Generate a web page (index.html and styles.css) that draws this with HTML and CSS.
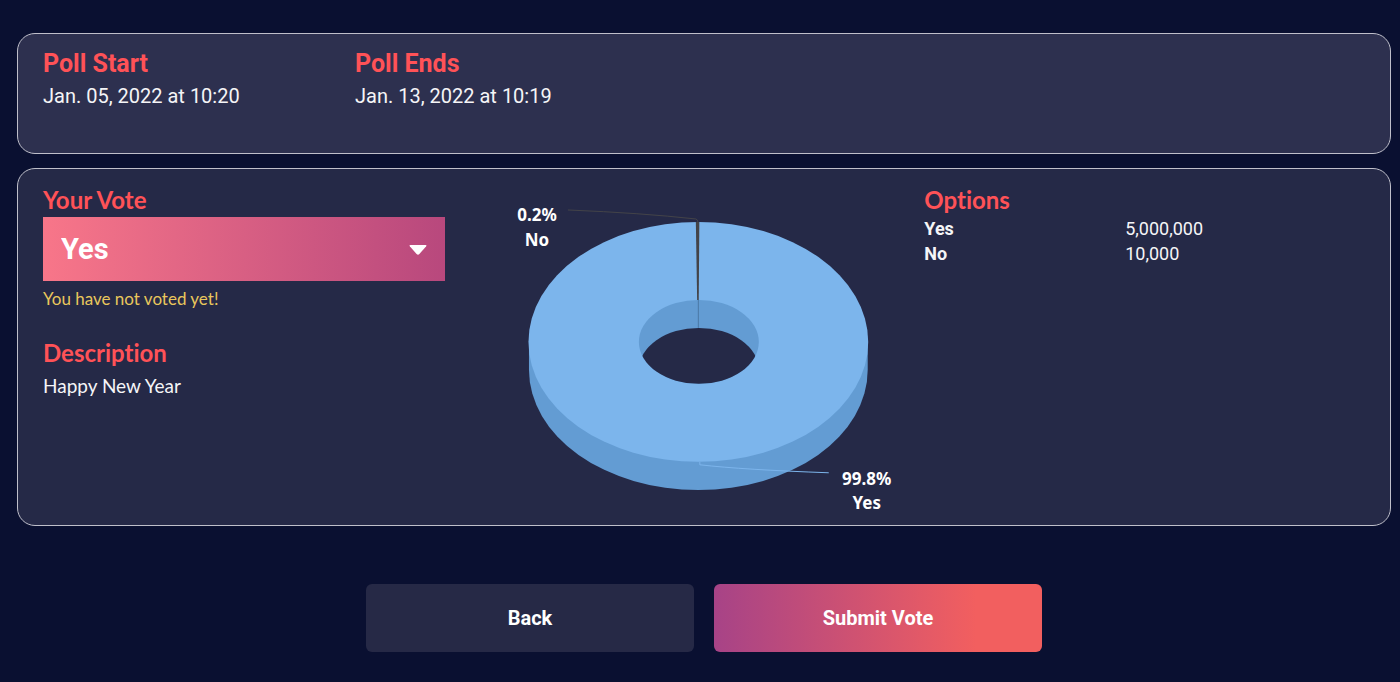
FILE: index.html
```html
<!DOCTYPE html>
<html lang="en">
  <head>
    <meta charset="UTF-8" />
    <meta name="viewport" content="width=device-width, initial-scale=1.0" />
    <title>Poll</title>
    <link rel="stylesheet" href="styles.css">
  </head>
  <body>
    <main class="container">
      <section class="card card-dates">
        <div>
          <h2>Poll Start</h2>
          <p>Jan. 05, 2022 at 10:20</p>
        </div>
        <div>
          <h2>Poll Ends</h2>
          <p>Jan. 13, 2022 at 10:19</p>
        </div>
      </section>

      <form id="vote-form">
        <section class="card card-vote">
          <div class="vote">
            <label class="title" for="vote-select">Your Vote</label>
            <div class="select-box">
              <select id="vote-select">
                <option selected>Yes</option>
                <option>No</option>
              </select>
              <svg class="arrow" viewBox="0 0 18 10" aria-hidden="true">
                <path d="M1.5 0h15q1.6 0 .7 1.3L10.4 9q-1.4 1.4-2.8 0L.8 1.3Q-.1 0 1.5 0z" />
              </svg>
            </div>
            <p class="warning">You have not voted yet!</p>
            <h2 class="title">Description</h2>
            <p class="description">Happy New Year</p>
          </div>

          <svg class="chart" viewBox="0 0 441 322" role="img" aria-label="Yes 99.8%, No 0.2%">
            <defs>
              <clipPath id="hole">
                <ellipse cx="215" cy="155" rx="60" ry="42" />
              </clipPath>
            </defs>
            <!-- outer side and top face -->
            <path class="side" d="M45 155v28a169 120 0 0 0 339 0v-28z" />
            <ellipse class="face" cx="214.5" cy="155" rx="170" ry="120" />
            <!-- inner wall and hole -->
            <ellipse class="side" cx="215" cy="155" rx="60" ry="42" />
            <ellipse class="gap" cx="215" cy="183" rx="60" ry="42" clip-path="url(#hole)" />
            <!-- "No" slice -->
            <path class="slice" d="M212 35h3.500l-.6 78h-1.600z" />
            <path class="seam" d="M214.5 113v28" />
            <path class="line-no" d="M84 23Q158 26 212 32q2 .5 2 3" />
            <path class="line-yes" d="M216 275v3q44 5 129 8" />
            <text x="53" y="34">0.2%</text>
            <text x="53" y="59">No</text>
            <text x="383" y="298">99.8%</text>
            <text x="383" y="322">Yes</text>
          </svg>

          <div class="options">
            <h2 class="title">Options</h2>
            <table>
              <tbody>
                <tr>
                  <th scope="row">Yes</th>
                  <td>5,000,000</td>
                </tr>
                <tr>
                  <th scope="row">No</th>
                  <td>10,000</td>
                </tr>
              </tbody>
            </table>
          </div>
        </section>

        <div class="buttons">
          <button type="button" class="btn btn-back">Back</button>
          <button type="submit" class="btn btn-submit">Submit Vote</button>
        </div>
      </form>
    </main>
  </body>
</html>
```
FILE: styles.css
```css
* {
  box-sizing: border-box;
}
body {
  font-family: Roboto, Arial, sans-serif;
  background-color: #0a1031;
  color: #f5f5f7;
  margin: 0;
}
h2,
p {
  margin: 0;
}
.container {
  padding: 33px 9px 30px 17px;
}
.card {
  display: grid;
  padding: 17px 25px 16px;
  border: 1px solid #bfbfca;
  border-radius: 18px;
}
.card-dates {
  grid-template-columns: repeat(auto-fill, 312px);
  min-height: 121px;
  padding-top: 14px;
  background-color: #2d304f;
  font-size: 20px;
  line-height: 32px;
}
.card-dates h2 {
  color: #ff5257;
  font-size: 25px;
  line-height: 32px;
}
.card-vote {
  grid-template-columns: repeat(3, 1fr);
  margin-top: 14px;
  background-color: #252947;
}
.title {
  display: block;
  color: #ff5257;
  font-family: Lato, sans-serif;
  font-size: 24px;
  font-weight: 700;
  font-variant-ligatures: none;
  line-height: 28px;
}
.vote,
.options {
  padding-right: 39px;
}
.select-box {
  position: relative;
  margin-top: 3px;
}
.select-box select {
  display: block;
  width: 100%;
  height: 64px;
  padding: 0 18px;
  border: none;
  border-radius: 0;
  appearance: none;
  background: linear-gradient(to right, #f87689, #b8487d);
  color: #fff;
  font-family: inherit;
  font-size: 29px;
  font-weight: 700;
  cursor: pointer;
}
.select-box option {
  background-color: #252947;
}
.arrow {
  position: absolute;
  top: 28px;
  right: 18px;
  width: 18px;
  height: 10px;
  fill: #fff;
  pointer-events: none;
}
.warning {
  margin: 6px 0 28px;
  color: #e9c75c;
  font-family: Lato, sans-serif;
  font-size: 17px;
  line-height: 24px;
}
.description {
  margin-top: 6px;
  font-family: Lato, sans-serif;
  font-size: 19px;
  line-height: 26px;
}
.chart {
  display: block;
  width: 100%;
  margin-top: 1px;
  overflow: visible;
}
.chart .face {
  fill: #7cb5ec;
}
.chart .side {
  fill: #639cd3;
}
.chart .gap {
  fill: #252947;
}
.chart .slice {
  fill: #434348;
}
.chart .seam {
  stroke: #4a78a5;
}
.chart .line-no {
  fill: none;
  stroke: #434348;
}
.chart .line-yes {
  fill: none;
  stroke: #7cb5ec;
}
.chart text {
  fill: #fff;
  font-family: "Noto Sans", sans-serif;
  font-size: 17px;
  font-weight: 700;
  text-anchor: middle;
}
.options table {
  width: 100%;
  margin-top: 2px;
  border-collapse: collapse;
  table-layout: fixed;
  font-size: 18px;
  line-height: 25px;
}
.options th,
.options td {
  padding: 0;
  text-align: left;
}
.buttons {
  display: flex;
  justify-content: center;
  gap: 20px;
  margin-top: 58px;
}
.btn {
  width: 328px;
  height: 68px;
  border: none;
  border-radius: 6px;
  color: #fff;
  font-family: inherit;
  font-size: 20px;
  font-weight: 700;
  cursor: pointer;
}
.btn-back {
  background-color: #262946;
}
.btn-submit {
  background: linear-gradient(to right, #a74387, #f25f5f 80%);
}
```
